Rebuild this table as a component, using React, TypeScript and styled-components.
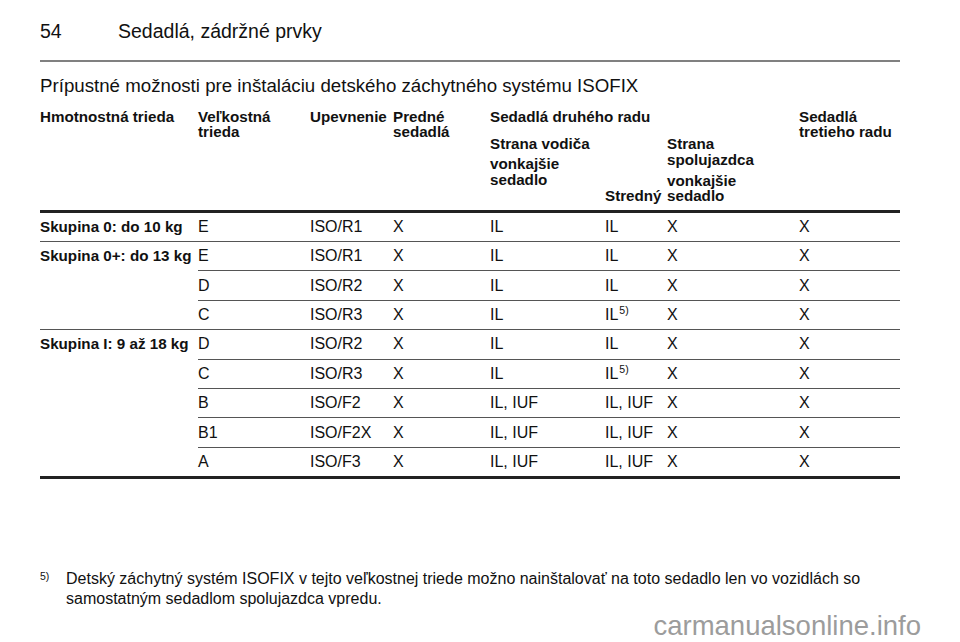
import React from 'react'
import styled, { createGlobalStyle } from 'styled-components'

const GlobalStyle = createGlobalStyle`
  html, body {
    margin: 0;
    padding: 0;
    background: #ffffff;
  }
  body {
    font-family: "Liberation Sans", Arial, Helvetica, sans-serif;
    color: #111;
  }
`

const COLS = '112px 83px 97px 115px 62px 132px 100px'

const Page = styled.div`
  position: relative;
  width: 960px;
  height: 642px;
  padding: 0 60px 0 40px;
  box-sizing: border-box;
  overflow: hidden;
`

const RunningHead = styled.header`
  display: flex;
  padding: 19px 0 17px;
  border-bottom: 2px solid #808080;
  font-size: 19.5px;
  line-height: 24px;
`

const PageNumber = styled.span`
  width: 78px;
  flex: none;
`

const Title = styled.h1`
  margin: 12.6px 0 0;
  font-size: 18.7px;
  line-height: 22px;
  font-weight: normal;
`

const Table = styled.div`
  margin-top: 12px;
  font-size: 16px;
  border-bottom: 3px solid #222;
`

const Head = styled.div`
  display: grid;
  grid-template-columns: 158px ${COLS};
  grid-template-rows: auto auto;
  row-gap: 12px;
  padding-bottom: 6px;
  border-bottom: 3px solid #222;
  font-size: 15.2px;
  font-weight: bold;
  line-height: 15.5px;
`

const HeadCell = styled.div<{ $col: string; $row?: string; $end?: boolean }>`
  grid-column: ${({ $col }) => $col};
  grid-row: ${({ $row }) => $row || '1 / span 2'};
  align-self: ${({ $end }) => ($end ? 'end' : 'start')};
`

const Para = styled.div<{ $gap?: number }>`
  margin-top: ${({ $gap }) => $gap || 0}px;
`

const Group = styled.div`
  display: flex;
  border-bottom: 1px solid #555;
  &:last-child {
    border-bottom: none;
  }
`

const GroupLabel = styled.div`
  width: 158px;
  flex: none;
  font-size: 15.2px;
  font-weight: bold;
  line-height: 28.4px;
  white-space: nowrap;
`

const SubRows = styled.div`
  flex: 1;
`

const SubRow = styled.div`
  display: grid;
  grid-template-columns: ${COLS};
  align-items: center;
  height: 29.4px;
  box-sizing: border-box;
  border-bottom: 1px solid #555;
  white-space: nowrap;
  &:last-child {
    height: 28.4px;
    border-bottom: none;
  }
`

const Sup = styled.sup`
  font-size: 10.5px;
  line-height: 0;
  vertical-align: baseline;
  position: relative;
  top: -6px;
  margin-left: 1px;
`

const Footnote = styled.div`
  display: flex;
  margin-top: 90px;
`

const FootMarker = styled.span`
  width: 26px;
  flex: none;
  font-size: 10.5px;
  line-height: 14px;
`

const FootText = styled.p`
  margin: 0;
  font-size: 16px;
  line-height: 20px;
`

const Watermark = styled.div`
  position: absolute;
  right: 39px;
  bottom: 2px;
  font-size: 27.5px;
  line-height: 28px;
  color: #9c9c9c;
`

type Row = { size: string; mount: string; front: string; driver: string; center: string; note?: boolean; passenger: string; third: string }

const groups: { label: string; rows: Row[] }[] = [
  {
    label: 'Skupina 0: do 10 kg',
    rows: [{ size: 'E', mount: 'ISO/R1', front: 'X', driver: 'IL', center: 'IL', passenger: 'X', third: 'X' }],
  },
  {
    label: 'Skupina 0+: do 13 kg',
    rows: [
      { size: 'E', mount: 'ISO/R1', front: 'X', driver: 'IL', center: 'IL', passenger: 'X', third: 'X' },
      { size: 'D', mount: 'ISO/R2', front: 'X', driver: 'IL', center: 'IL', passenger: 'X', third: 'X' },
      { size: 'C', mount: 'ISO/R3', front: 'X', driver: 'IL', center: 'IL', note: true, passenger: 'X', third: 'X' },
    ],
  },
  {
    label: 'Skupina I: 9 až 18 kg',
    rows: [
      { size: 'D', mount: 'ISO/R2', front: 'X', driver: 'IL', center: 'IL', passenger: 'X', third: 'X' },
      { size: 'C', mount: 'ISO/R3', front: 'X', driver: 'IL', center: 'IL', note: true, passenger: 'X', third: 'X' },
      { size: 'B', mount: 'ISO/F2', front: 'X', driver: 'IL, IUF', center: 'IL, IUF', passenger: 'X', third: 'X' },
      { size: 'B1', mount: 'ISO/F2X', front: 'X', driver: 'IL, IUF', center: 'IL, IUF', passenger: 'X', third: 'X' },
      { size: 'A', mount: 'ISO/F3', front: 'X', driver: 'IL, IUF', center: 'IL, IUF', passenger: 'X', third: 'X' },
    ],
  },
]

export default function App() {
  return (
    <>
      <GlobalStyle />
      <Page>
        <RunningHead>
          <PageNumber>54</PageNumber>
          <span>Sedadlá, zádržné prvky</span>
        </RunningHead>

        <Title>Prípustné možnosti pre inštaláciu detského záchytného systému ISOFIX</Title>

        <Table>
          <Head>
            <HeadCell $col="1">Hmotnostná trieda</HeadCell>
            <HeadCell $col="2">
              Veľkostná
              <br />
              trieda
            </HeadCell>
            <HeadCell $col="3">Upevnenie</HeadCell>
            <HeadCell $col="4">
              Predné
              <br />
              sedadlá
            </HeadCell>
            <HeadCell $col="5 / span 3" $row="1">
              Sedadlá druhého radu
            </HeadCell>
            <HeadCell $col="5" $row="2">
              <Para>Strana vodiča</Para>
              <Para $gap={4.5}>
                vonkajšie
                <br />
                sedadlo
              </Para>
            </HeadCell>
            <HeadCell $col="6" $row="2" $end>
              Stredný
            </HeadCell>
            <HeadCell $col="7" $row="2">
              <Para>
                Strana
                <br />
                spolujazdca
              </Para>
              <Para $gap={5.5}>
                vonkajšie
                <br />
                sedadlo
              </Para>
            </HeadCell>
            <HeadCell $col="8">
              Sedadlá
              <br />
              tretieho radu
            </HeadCell>
          </Head>

          {groups.map((g) => (
            <Group key={g.label}>
              <GroupLabel>{g.label}</GroupLabel>
              <SubRows>
                {g.rows.map((r, i) => (
                  <SubRow key={i}>
                    <span>{r.size}</span>
                    <span>{r.mount}</span>
                    <span>{r.front}</span>
                    <span>{r.driver}</span>
                    <span>
                      {r.center}
                      {r.note && <Sup>5)</Sup>}
                    </span>
                    <span>{r.passenger}</span>
                    <span>{r.third}</span>
                  </SubRow>
                ))}
              </SubRows>
            </Group>
          ))}
        </Table>

        <Footnote>
          <FootMarker>5)</FootMarker>
          <FootText>
            Detský záchytný systém ISOFIX v tejto veľkostnej triede možno nainštalovať na toto sedadlo len vo vozidlách so
            samostatným sedadlom spolujazdca vpredu.
          </FootText>
        </Footnote>

        <Watermark>carmanualsonline.info</Watermark>
      </Page>
    </>
  )
}
